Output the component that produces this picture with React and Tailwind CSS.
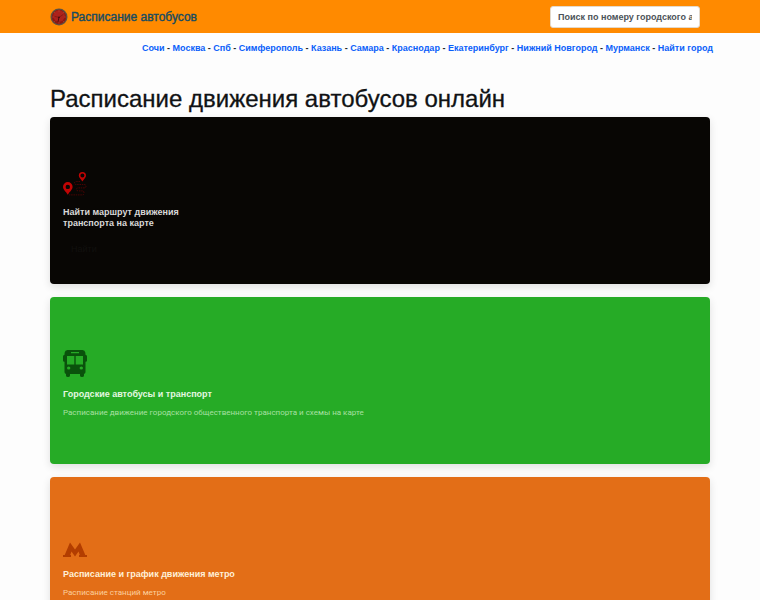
const cities = [
  'Сочи',
  'Москва',
  'Спб',
  'Симферополь',
  'Казань',
  'Самара',
  'Краснодар',
  'Екатеринбург',
  'Нижний Новгород',
  'Мурманск',
  'Найти город',
];

const ClockLogo = () => (
  <svg viewBox="0 0 18 18" className="h-[18px] w-[18px]" aria-hidden="true">
    <circle cx="9" cy="9" r="8.5" fill="#5d5042" />
    <circle cx="9" cy="9" r="7.2" fill="#8d1712" />
    <circle cx="9" cy="8" r="5.8" fill="#ad221b" />
    <g stroke="#b8523f" strokeWidth="0.6">
      <path d="M9 2.2v1.6M9 14.2v1.6M2.2 9h1.6M14.2 9h1.6M4.2 4.2l1 1M12.8 12.8l1 1M4.2 13.8l1-1M12.8 5.2l1-1" />
    </g>
    <path d="M4.5 8.3L9 9.4l4.3-3" fill="none" stroke="#7a1510" strokeWidth="0.7" />
    <path d="M9 9.2l-1 4.6" stroke="#3e0b08" strokeWidth="0.9" />
    <circle cx="9" cy="9.2" r="0.7" fill="#2e0b08" />
  </svg>
);

const RouteIcon = () => (
  <svg viewBox="0 0 24 25" className="h-[25px] w-6" aria-hidden="true">
    <path
      fill="#c00404"
      fillRule="evenodd"
      d="M19.400 0a3.600 3.600 0 0 0-3.600 3.600c0 2.200 1.900 3.300 3.600 5.900 1.700-2.600 3.600-3.700 3.600-5.900A3.600 3.600 0 0 0 19.400 0zm0 1.600a2 2 0 1 1 0 4 2 2 0 0 1 0-4z"
    />
    <path
      fill="#c00404"
      fillRule="evenodd"
      d="M4.800 10A4.800 4.800 0 0 0 0 14.800c0 3 2.600 4.300 4.800 8 2.200-3.700 4.800-5 4.800-8A4.800 4.800 0 0 0 4.800 10zm0 2.700a2.200 2.200 0 1 1 0 4.400 2.200 2.200 0 0 1 0-4.400z"
    />
    <path
      d="M17 9.500h-3.500q-2 0-2 1.500t2 1.500h7.500q2 0 2 1.700t-2 1.700h-5.500q-2 0-2 1.500t2 1.500h4q1.500 0 1.500 2t-1.500 2H6"
      fill="none"
      stroke="#5a0505"
      strokeWidth="0.8"
      strokeDasharray="1.500 0.800"
    />
  </svg>
);

const BusIcon = () => (
  <svg viewBox="0 0 24 27" className="h-[27px] w-6" aria-hidden="true">
    <path
      fill="#0a520c"
      fillRule="evenodd"
      d="M4.500 0h15Q22 0 22.300 2.500L22.600 5h.4Q24 5 24 6.500v4q0 1.200-1.200 1.200h-.3V22q0 1.500-1.500 2v1.500q0 1.500-2 1.500t-2-1.500V24H7v1.500Q7 27 5 27t-2-1.500V24q-1.500-.5-1.500-2V11.700h-.3Q0 11.700 0 10.500v-4Q0 5 1 5h.4l.3-2.500Q2 0 4.500 0zM8 2v1.300h8V2zM4 6v8.500h7.300V6zm8.700 0v8.500H20V6zM5.700 16.500a1.700 1.500 0 1 0 0 3 1.700 1.500 0 0 0 0-3zm12.600 0a1.700 1.500 0 1 0 0 3 1.700 1.500 0 0 0 0-3z"
    />
  </svg>
);

const MetroIcon = () => (
  <svg viewBox="0 0 24 15" className="h-[15px] w-6" aria-hidden="true">
    <path
      fill="#b33d00"
      d="M7 0.500l5 7 5-7 5.300 12.500H24v2h-8v-2h.8l-1.300-3.500L12 14.500 8.500 9.500 7.200 13H8v2H0v-2h1.700z"
    />
  </svg>
);

const cards = [
  {
    icon: BusIcon,
    title: 'Городские автобусы и транспорт',
    text: 'Расписание движение городского общественного транспорта и схемы на карте',
    color: 'bg-[#26ab26]',
    titleColor: 'text-[#e3f8e0]',
    textColor: 'text-[#a6e0a2]',
  },
  {
    icon: MetroIcon,
    title: 'Расписание и график движения метро',
    text: 'Расписание станций метро',
    color: 'bg-[#e36e17]',
    titleColor: 'text-[#fff0d8]',
    textColor: 'text-[#fbcf9d]',
  },
];

const Header = () => (
  <header className="bg-[#ff8a00]">
    <div className="mx-[50px] flex h-[33px] items-center justify-between pr-[10px]">
      <a href="#" className="flex items-center gap-[3px] text-[12px] text-[#174c61] [-webkit-text-stroke:0.4px]">
        <ClockLogo />
        Расписание автобусов
      </a>
      <input
        type="text"
        aria-label="Поиск по номеру городского автобуса"
        placeholder="Поиск по номеру городского автобуса"
        className="h-[22px] w-[150px] rounded-[3px] border border-[#e3d9cb] bg-white px-[7px] text-[9px] font-bold text-[#212529] placeholder:text-[#4c5258]"
      />
    </div>
  </header>
);

const CityNav = () => (
  <nav className="mr-[47px] ml-[50px] pt-[8px] text-right text-[9px] leading-[14px] font-bold text-[#212529]">
    {cities.map((city, i) => (
      <span key={city}>
        {i > 0 && ' - '}
        <a href="#" className="text-[#0a60fa]">{city}</a>
      </span>
    ))}
  </nav>
);

export default function App() {
  return (
    <div className="bg-[#fdfdfd] font-['Liberation_Sans',Arial,sans-serif]">
      <Header />
      <CityNav />
      <main className="mx-[50px] pt-[29px] pb-4">
        <h1 className="text-[24px] leading-[30px] text-[#101214] [-webkit-text-stroke:0.3px]">
          Расписание движения автобусов онлайн
        </h1>
        <div className="mt-[3px] flex flex-col gap-[13px]">
          <section className="flex min-h-[167px] flex-col justify-end rounded-[4px] bg-[#080604] px-[13px] pb-[28px] shadow-[0_3px_8px_rgba(0,0,0,0.12)]">
            <RouteIcon />
            <h2 className="mt-[10px] w-[130px] text-[9px] leading-[11px] font-bold text-[#d8d8d8]">
              Найти маршрут движения транспорта на карте
            </h2>
            <button type="button" className="mt-[13px] self-start px-2 text-[9px] leading-[14px] text-[#11100e]">
              Найти
            </button>
          </section>
          {cards.map(({ icon: Icon, title, text, color, titleColor, textColor }) => (
            <section
              key={title}
              className={`flex min-h-[167px] flex-col justify-end rounded-[4px] px-[13px] pb-[45px] shadow-[0_3px_8px_rgba(0,0,0,0.12)] ${color}`}
            >
              <Icon />
              <h2 className={`mt-[10px] text-[9px] leading-[14px] font-bold ${titleColor}`}>{title}</h2>
              <p className={`mt-[6px] font-[Roboto,sans-serif] text-[8px] leading-[12px] ${textColor}`}>{text}</p>
            </section>
          ))}
        </div>
      </main>
    </div>
  );
}
